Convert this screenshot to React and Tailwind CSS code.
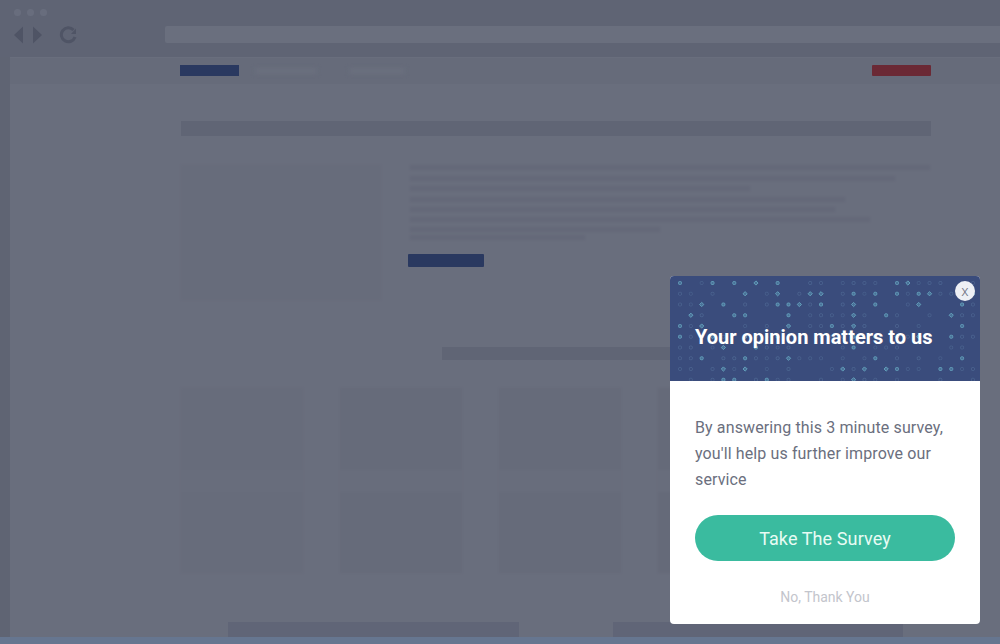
import React from 'react';

// pseudo random so the dot texture stays the same on every render
const rnd = (a, b) => {
  const v = Math.sin(a * 12.9898 + b * 78.233) * 43758.5453;
  return v - Math.floor(v);
};

function DotPattern() {
  const dots = [];
  for (let row = 0; row < 10; row++) {
    for (let col = 0; col < 28; col++) {
      const r = rnd(row + 1, col + 1);
      if (r < 0.3) continue;
      const x = 10 + col * 10.85;
      const y = 7 + row * 10.75;
      const bright = r > 0.72;
      dots.push(
        <rect
          key={row + '-' + col}
          x={x - 1.5}
          y={y - 1.5}
          width="3"
          height="3"
          rx={r > 0.88 ? 0 : 1}
          transform={r > 0.88 ? `rotate(45 ${x} ${y})` : undefined}
          fill={bright ? '#4f7aa0' : 'none'}
          stroke={bright ? '#6fb8cc' : '#6485ab'}
          strokeWidth="0.9"
          opacity={bright ? 0.8 : 0.2 + r * 0.35}
        />
      );
    }
  }
  return (
    <svg className="absolute inset-0 blur-[0.3px]" width="310" height="105" viewBox="0 0 310 105">
      {dots}
    </svg>
  );
}

function TextLine({ width, className = '' }) {
  return <div className={`h-[5px] bg-[#646979] blur-[1px] ${width} ${className}`} />;
}

function CardColumn({ tone }) {
  return (
    <div className={`w-[122px] h-[185px] flex flex-col justify-center blur-[1px] ${tone}`}>
      <div className="h-[22px] bg-[#686d7c]" />
    </div>
  );
}

function Popup() {
  return (
    <div className="absolute left-[670px] top-[276px] w-[310px] h-[348px] bg-white rounded-[4px] overflow-hidden flex flex-col font-['Roboto',sans-serif]">
      <div className="relative h-[105px] bg-[#3a4c7c] flex items-center pl-[25px] pt-[16px]">
        <DotPattern />
        <h1 className="relative text-[20px] font-bold text-white leading-none">Your opinion matters to us</h1>
        <div className="absolute left-[285px] top-[5px] w-5 h-5 rounded-full bg-[#eef0f5] flex items-center justify-center text-[15px] font-light leading-none text-[#6f7383]">
          x
        </div>
      </div>
      <div className="flex-1 flex flex-col px-[25px] pt-[34px]">
        <p className="text-[16px] leading-[26px] tracking-[0.12px] text-[#6b6f7e]">
          By answering this 3 minute survey, you'll help us further improve our service
        </p>
        <button className="mt-[22px] h-[46px] rounded-full bg-[#3abb9f] text-[18px] tracking-[0.1px] text-[#e8fbf4]">
          Take The Survey
        </button>
        <div className="mt-[28px] text-center text-[14px] leading-[16px] text-[#c3c5cc]">No, Thank You</div>
      </div>
    </div>
  );
}

export default function App() {
  return (
    <div className="relative w-[1000px] h-[644px] overflow-hidden bg-[#696e7d] flex flex-col">
      {/* Barra del navegador */}
      <div className="h-[57px] shrink-0 bg-[#5f6474] flex flex-col pl-[13px] pt-[9px]">
        <div className="flex gap-[6px] pl-[1px] opacity-70 blur-[0.5px]">
          <span className="w-[7px] h-[7px] rounded-full bg-[#6d7282]" />
          <span className="w-[7px] h-[7px] rounded-full bg-[#6d7282]" />
          <span className="w-[7px] h-[7px] rounded-full bg-[#6d7282]" />
        </div>
        <div className="flex items-center mt-[10px] h-[17px]">
          <svg width="64" height="18" viewBox="0 0 64 18" className="shrink-0 blur-[0.4px]">
            <path d="M1 9 L10 0.5 V17.5 Z" fill="#4f5465" />
            <path d="M20 0.5 L20 17.5 L29 9 Z" fill="#4f5465" />
            <path d="M60.5 4 A7 7 0 1 0 62 11" fill="none" stroke="#4f5465" strokeWidth="3" />
            <path d="M63 2.5 V8 H58 Z" fill="#4f5465" />
          </svg>
          <div className="ml-[88px] flex-1 h-[17px] rounded-l-[2px] bg-[#6a6f7e]" />
        </div>
      </div>

      <div className="flex-1 flex">
        <div className="w-[10px] bg-[#5f6473]" />
        <div className="flex-1 flex flex-col">
          {/* Menu */}
          <div className="mt-px h-[26px] bg-[#666b7a] flex items-start pt-[7px] pl-[170px] pr-[69px]">
            <div className="w-[59px] h-[11px] bg-[#2a3960]" />
            <div className="ml-[16px] mt-[3px] w-[62px] h-[6px] bg-[#6a6f7e] blur-[2px]" />
            <div className="ml-[32px] mt-[3px] w-[56px] h-[6px] bg-[#6a6f7e] blur-[2px]" />
            <div className="ml-auto w-[59px] h-[11px] rounded-[1px] bg-[#6b2935]" />
          </div>

          <div className="pl-[171px] pr-[69px] pt-[37px]">
            <div className="h-[15px] bg-[#606575] blur-[0.5px]" />

            <div className="flex mt-[29px]">
              <div className="w-[200px] h-[135px] bg-[#676c7b] blur-[1px]" />
              <div className="flex-1 ml-[29px] flex flex-col">
                <TextLine width="w-[520px]" />
                <TextLine width="w-[485px]" className="mt-[6px]" />
                <TextLine width="w-[340px]" className="mt-[5px]" />
                <TextLine width="w-[435px]" className="mt-[6px]" />
                <TextLine width="w-[425px]" className="mt-[5px]" />
                <TextLine width="w-[460px]" className="mt-[5px]" />
                <TextLine width="w-[250px]" className="mt-[5px]" />
                <TextLine width="w-[175px]" className="mt-[3px]" />
                <div className="w-[76px] h-[13px] mt-[14px] -ml-[2px] rounded-[1px] bg-[#2a3960]" />
              </div>
            </div>
          </div>

          <div className="ml-[432px] mt-[47px] w-[300px] h-[13px] bg-[#606575] blur-[0.5px]" />

          {/* Tarjetas */}
          <div className="flex pl-[171px] mt-[28px] gap-[37px]">
            <CardColumn tone="bg-[#676c7b]" />
            <CardColumn tone="bg-[#666b7a]" />
            <CardColumn tone="bg-[#666b7a]" />
            <CardColumn tone="bg-[#656a79]" />
          </div>

          <div className="flex pl-[218px] mt-[49px] gap-[94px]">
            <div className="w-[291px] h-[15px] bg-[#606577] blur-[0.5px]" />
            <div className="w-[290px] h-[15px] bg-[#606577] blur-[0.5px]" />
          </div>
        </div>
      </div>

      <div className="h-[7px] shrink-0 bg-[#667690]" />

      <Popup />
    </div>
  );
}
